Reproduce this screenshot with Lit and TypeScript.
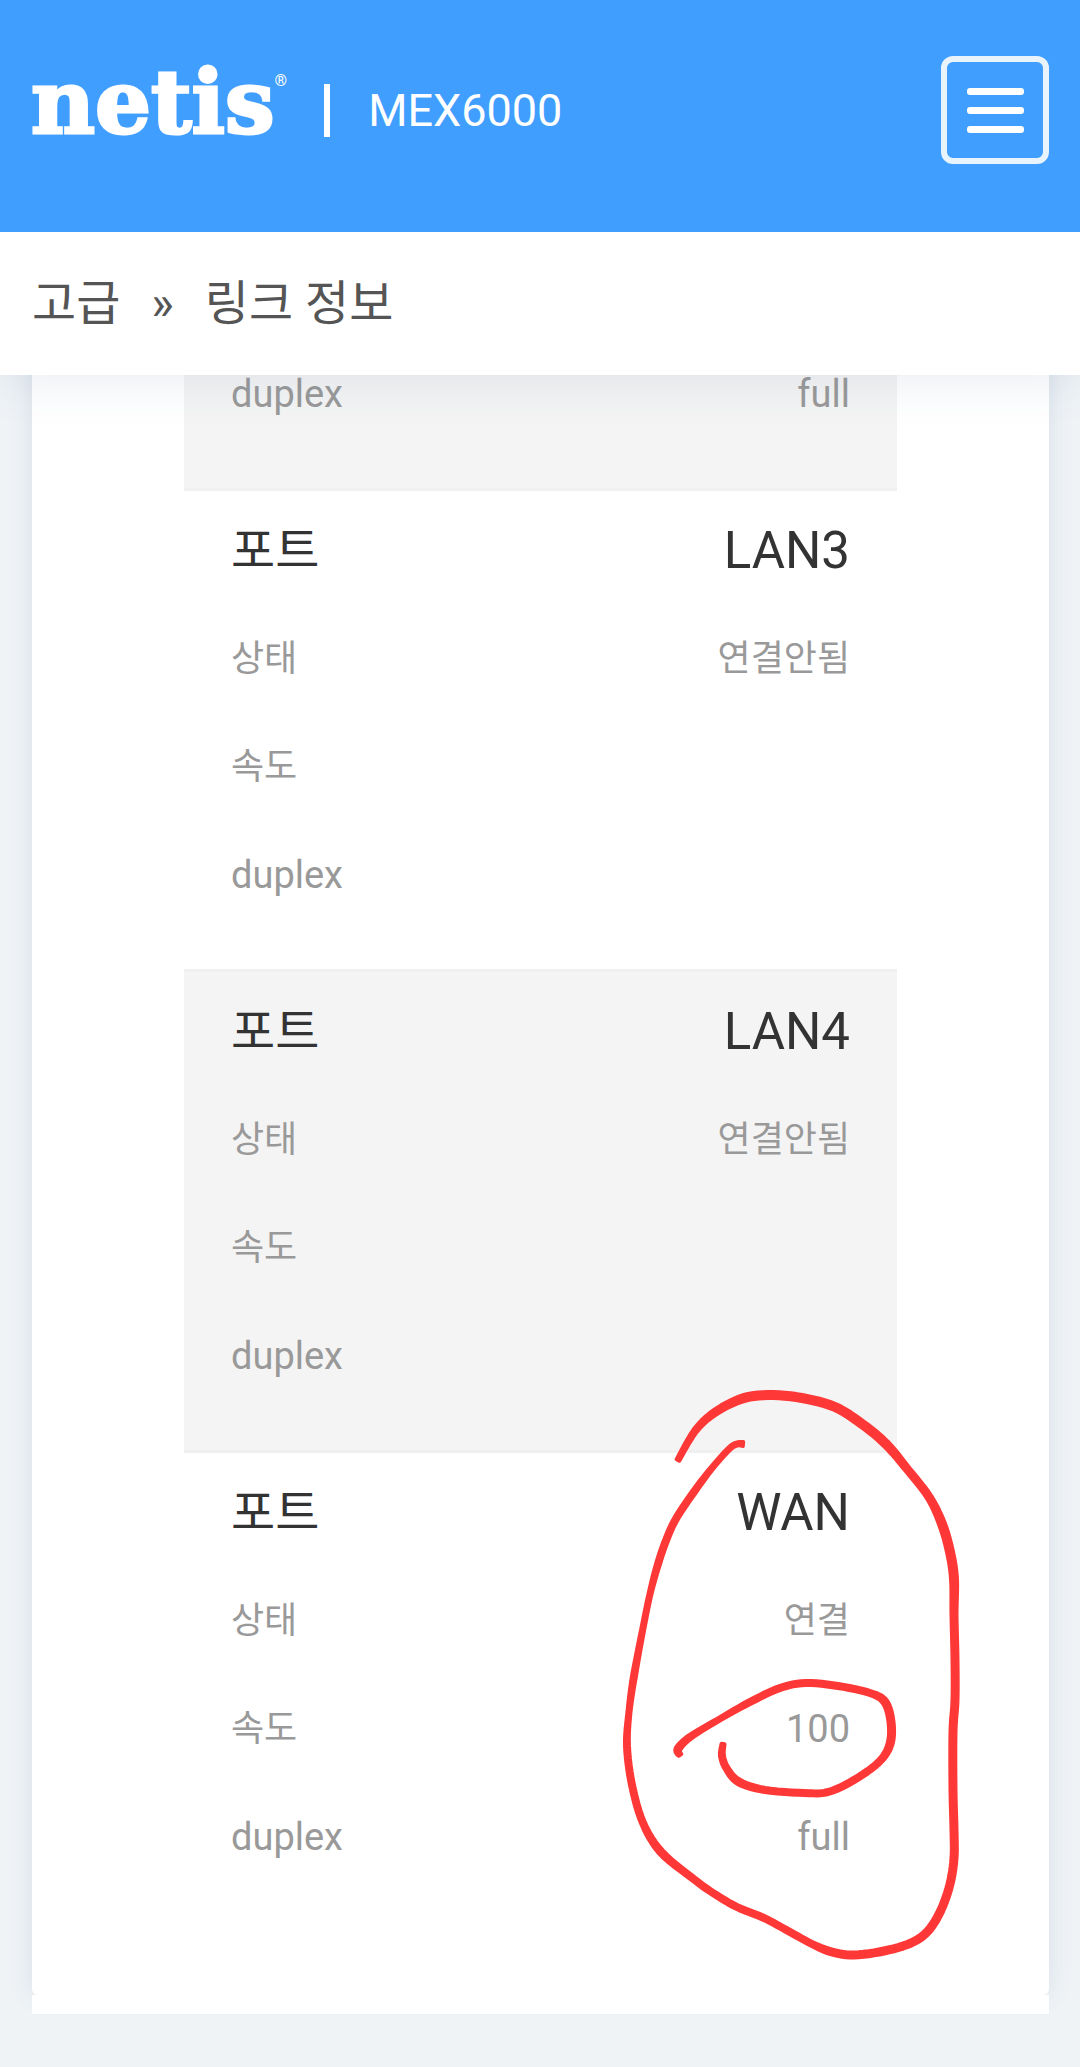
import { LitElement, html, svg, css, nothing } from "lit";
import { customElement, property } from "lit/decorators.js";

/* x, y and the width of the pen there */
type Dot = [number, number, number];

interface Row {
  label: string;
  value: string;
}

interface Port {
  name?: string;
  rows: Row[];
  marked?: boolean;
}

const PORTS: Port[] = [
  { rows: [{ label: "duplex", value: "full" }] },
  {
    name: "LAN3",
    rows: [
      { label: "상태", value: "연결안됨" },
      { label: "속도", value: "" },
      { label: "duplex", value: "" },
    ],
  },
  {
    name: "LAN4",
    rows: [
      { label: "상태", value: "연결안됨" },
      { label: "속도", value: "" },
      { label: "duplex", value: "" },
    ],
  },
  {
    name: "WAN",
    marked: true,
    rows: [
      { label: "상태", value: "연결" },
      { label: "속도", value: "100" },
      { label: "duplex", value: "full" },
    ],
  },
];

const STROKES: Dot[][] = [
  [
    [78, 90, 6], [95, 61, 7], [114, 43, 8], [141, 29, 9], [168, 25, 9], [202, 28, 9],
    [235, 37, 9], [262, 54, 9], [286, 74, 9], [308, 100, 8], [329, 127, 8],
    [342, 154, 9], [350, 182, 9], [354, 209, 9], [354, 245, 8], [355, 290, 8],
    [355, 330, 8], [353, 362, 8], [353, 420, 8], [354, 460, 8], [354, 488, 8],
    [350, 514, 8], [341, 540, 8], [328, 561, 8], [311, 573, 8], [284, 581, 8],
    [254, 585, 8], [232, 582, 8], [212, 574, 7], [190, 562, 7], [164, 548, 7],
    [137, 537, 7], [113, 523, 7], [91, 507, 7], [61, 482, 8], [43, 453, 7],
    [32, 415, 7], [27, 376, 7], [29, 342, 6], [34, 306, 7], [43, 258, 6],
    [50, 224, 6], [58, 194, 7], [67, 168, 7], [77, 147, 7], [96, 119, 7],
    [112, 98, 6], [129, 79, 6], [137, 74, 6], [143, 74, 7],
  ],
  [
    [80, 385, 6], [78, 379, 8], [90, 367, 7], [118, 350, 6], [150, 332, 7],
    [180, 318, 7], [206, 313, 7], [238, 316, 7], [270, 323, 7], [285, 332, 8],
    [291, 352, 8], [290, 374, 8], [279, 392, 7], [254, 410, 7], [228, 422, 7],
    [204, 423, 7], [165, 420, 7], [139, 412, 8], [127, 399, 7], [122, 386, 7],
    [123, 374, 6],
  ],
];

const STEPS = 6;
const EDGE = 3;

/* Catmull-Rom value between b and c at t. */
function blend(a: number, b: number, c: number, e: number, t: number): number {
  return (
    (2 * b + (c - a) * t + (2 * a - 5 * b + 4 * c - e) * t * t + (3 * b - a - 3 * c + e) * t * t * t) / 2
  );
}

/* Outline of a stroke whose width changes along its length. */
function outline(dots: Dot[]): string {
  const fine: Dot[] = [];
  for (let i = 0; i < dots.length - 1; i++) {
    const a = dots[Math.max(i - 1, 0)];
    const b = dots[i];
    const c = dots[i + 1];
    const e = dots[Math.min(i + 2, dots.length - 1)];
    for (let s = 0; s < STEPS; s++) {
      const t = s / STEPS;
      fine.push([
        blend(a[0], b[0], c[0], e[0], t),
        blend(a[1], b[1], c[1], e[1], t),
        b[2] + (c[2] - b[2]) * t,
      ]);
    }
  }
  fine.push(dots[dots.length - 1]);
  const left: string[] = [];
  const right: string[] = [];
  fine.forEach(([x, y, w], i) => {
    const p = fine[Math.max(i - 1, 0)];
    const n = fine[Math.min(i + 1, fine.length - 1)];
    const dx = n[0] - p[0];
    const dy = n[1] - p[1];
    const len = Math.hypot(dx, dy) || 1;
    const h = (w - EDGE) / 2;
    left.push(`${x - (dy / len) * h} ${y + (dx / len) * h}`);
    right.unshift(`${x + (dy / len) * h} ${y - (dx / len) * h}`);
  });
  return `M${[...left, ...right].join("L")}Z`;
}

@customElement("pen-marks")
export class PenMarks extends LitElement {
  static styles = css`
    :host {
      display: block;
      pointer-events: none;
    }
    .marks {
      display: block;
      width: 400px;
      height: 620px;
      fill: #fe3737;
      stroke: #fe3737;
      stroke-width: 4px;
      stroke-linejoin: round;
    }
  `;

  render() {
    return html`<svg class="marks" viewBox="0 0 400 620" aria-hidden="true">
      ${STROKES.map((s) => svg`<path d=${outline(s)}></path>`)}
    </svg>`;
  }
}

@customElement("port-group")
export class PortGroup extends LitElement {
  @property({ attribute: false }) port!: Port;

  static styles = css`
    :host {
      display: block;
      position: relative;
      padding: 6px 47px 40px;
      border-bottom: 3px solid #f0f0f0;
    }
    .rows {
      width: 100%;
      border-collapse: collapse;
    }
    .cell {
      height: 108px;
      padding: 0;
      box-sizing: border-box;
      font-size: 38px;
      line-height: 48px;
      font-weight: 400;
      color: #999;
      text-align: right;
      vertical-align: middle;
      white-space: nowrap;
    }
    .cell:lang(ko) {
      font-size: 36px;
    }
    .label {
      text-align: left;
    }
    .title {
      font-size: 51px;
      color: #333;
    }
    .title:lang(ko) {
      font-size: 48px;
    }
    .pen {
      position: absolute;
      top: -83px;
      right: -103px;
    }
  `;

  private cell(text: string, kind: string, header: boolean) {
    const lang = /[가-힣]/.test(text) ? "ko" : "en";
    return header
      ? html`<th class="cell label ${kind}" scope="row" lang=${lang}>${text}</th>`
      : html`<td class="cell ${kind}" lang=${lang}>${text}</td>`;
  }

  render() {
    const { name, rows, marked } = this.port;
    return html`
      <table class="rows">
        <tbody>
          ${name ? html`<tr>${this.cell("포트", "title", true)}${this.cell(name, "title", false)}</tr>` : nothing}
          ${rows.map((r) => html`<tr>${this.cell(r.label, "", true)}${this.cell(r.value, "", false)}</tr>`)}
        </tbody>
      </table>
      ${marked ? html`<pen-marks class="pen"></pen-marks>` : nothing}
    `;
  }
}

@customElement("app-root")
export class AppRoot extends LitElement {
  static styles = css`
    :host {
      display: block;
      min-height: 100vh;
      box-sizing: border-box;
      padding-bottom: 53px;
      overflow: hidden;
      background: #eff3f6;
      font-family: Roboto, "Noto Sans CJK KR", sans-serif;
    }
    .top {
      position: relative;
      z-index: 1;
      background: #fff;
      box-shadow: 0 4px 48px rgba(60, 90, 140, 0.12);
    }
    .bar {
      display: flex;
      align-items: center;
      padding: 56px 31px 68px;
      background: #409eff;
      color: #fff;
    }
    .logo {
      display: flex;
      align-items: flex-start;
      padding-bottom: 16px;
      color: #fff;
      text-decoration: none;
      line-height: 72px;
    }
    .word {
      font-family: "DejaVu Serif", serif;
      font-weight: 700;
      font-size: 88px;
      -webkit-text-stroke: 3px #fff;
    }
    .reg {
      font-size: 16px;
      line-height: 30px;
    }
    .rule {
      width: 6px;
      height: 53px;
      margin: 0 38px 0 37px;
      background: #fff;
    }
    .model {
      padding-top: 2px;
      font-size: 45px;
      line-height: 52px;
    }
    .menu {
      display: flex;
      flex-direction: column;
      align-items: center;
      justify-content: center;
      gap: 12px;
      width: 108px;
      height: 108px;
      margin: 0 0 0 auto;
      padding: 0;
      border: 6px solid #e8f3fc;
      border-radius: 12px;
      background: none;
    }
    .line {
      width: 57px;
      height: 7px;
      border-radius: 3px;
      background: #fff;
    }
    .crumbs {
      display: flex;
      align-items: center;
      gap: 31px;
      height: 143px;
      padding: 0 32px;
      font-size: 48px;
      line-height: 60px;
      color: #555;
    }
    .crumb {
      color: inherit;
      text-decoration: none;
    }
    .card {
      margin: -41px 31px 0 32px;
      padding: 0 152px 61px;
      border-radius: 0 0 6px 6px;
      background: #fff;
      box-shadow: 0 0 24px rgba(60, 90, 140, 0.12);
    }
    .group:nth-child(odd) {
      background: #f4f4f4;
    }
    .group:nth-child(even) {
      background: #fff;
    }
    .group:last-child {
      border-bottom-color: transparent;
    }
    .foot {
      position: relative;
      height: 19px;
      margin: 0 31px 0 32px;
      background: #fff;
      box-shadow: 0 20px 20px -16px rgba(60, 90, 140, 0.12);
    }
  `;

  render() {
    return html`
      <header class="top">
        <div class="bar">
          <a class="logo" href="#"><span class="word">netis</span><span class="reg">®</span></a>
          <span class="rule"></span>
          <span class="model">MEX6000</span>
          <button class="menu" type="button" aria-label="메뉴">
            <span class="line"></span><span class="line"></span><span class="line"></span>
          </button>
        </div>
        <nav class="crumbs" lang="ko">
          <a class="crumb" href="#">고급</a><span>»</span><a class="crumb" href="#">링크 정보</a>
        </nav>
      </header>
      <main>
        <div class="card">
          ${PORTS.map((p) => html`<port-group class="group" .port=${p}></port-group>`)}
        </div>
        <div class="foot"></div>
      </main>
    `;
  }
}
